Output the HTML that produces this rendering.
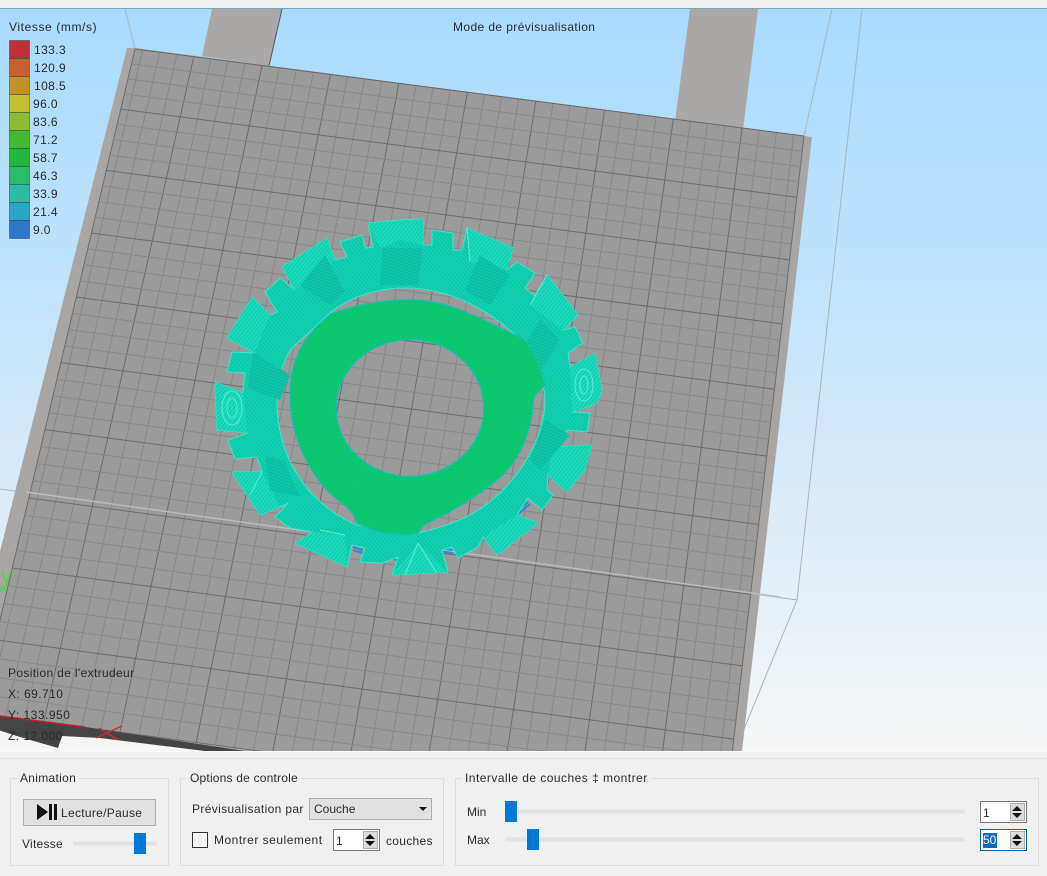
<!DOCTYPE html>
<html><head><meta charset="utf-8"><style>
html,body{margin:0;padding:0;width:1047px;height:876px;overflow:hidden;background:#f0f0f0}
body{position:relative;font-family:"Liberation Sans",sans-serif;font-size:12px;color:#2a2a2a}
.t{position:absolute;white-space:nowrap;line-height:14px}
.b{position:absolute;box-sizing:border-box}
.grp{position:absolute;box-sizing:border-box;border:1px solid #dcdcdc;top:778px;height:88px}
.cap{position:absolute;top:771px;background:#f0f0f0;padding:0 3px 0 3px;white-space:nowrap;line-height:14px}
.h{position:absolute;background:#0078d7;width:12px;height:21px}
.g{position:absolute;background:#e2e2e2;height:3px;border:1px solid #e8e8e8;box-sizing:content-box}
.sp{position:absolute;box-sizing:border-box;background:#fff;border:1px solid #7a7a7a;width:47px;height:22px}
.ar{position:absolute;right:1px;top:1px;width:15px;height:18px;background:#dcdcdc;border:1px solid #adadad;box-sizing:border-box}
.ar:before{content:"";position:absolute;left:1px;top:2px;border-left:5px solid transparent;border-right:5px solid transparent;border-bottom:5px solid #111}
.ar:after{content:"";position:absolute;left:1px;top:9px;border-left:5px solid transparent;border-right:5px solid transparent;border-top:5px solid #111}
</style></head><body>
<svg id="s" width="1047" height="876" viewBox="0 0 1047 876" style="position:absolute;left:0;top:0">
<defs>
<linearGradient id="sky" x1="0" y1="9" x2="0" y2="751" gradientUnits="userSpaceOnUse">
<stop offset="0" stop-color="#a9dbff"/><stop offset=".3" stop-color="#bbe1fd"/><stop offset=".72" stop-color="#e0edf8"/><stop offset="1" stop-color="#f5f6f6"/></linearGradient>
<pattern id="pg" width="3" height="3" patternUnits="userSpaceOnUse" patternTransform="rotate(-35)">
<rect width="3" height="3" fill="#08cc70"/><rect width="3" height="1" fill="#10bb6c"/></pattern>
<pattern id="pt" width="3" height="3" patternUnits="userSpaceOnUse" patternTransform="rotate(50)">
<rect width="3" height="3" fill="#12d2b2"/><rect width="3" height="1" fill="#0cc2a4"/></pattern>
<pattern id="pl" width="3" height="3" patternUnits="userSpaceOnUse" patternTransform="rotate(-50)">
<rect width="3" height="3" fill="#1edcbe"/><rect width="3" height="1" fill="#0fc8aa"/></pattern>
<pattern id="pd" width="3" height="3" patternUnits="userSpaceOnUse" patternTransform="rotate(20)">
<rect width="3" height="3" fill="#0fc6a8"/><rect width="3" height="1" fill="#0ab89c"/></pattern>
</defs>
<rect width="1047" height="751" fill="url(#sky)"/>
<g stroke="#a9b4bb" stroke-width="1" fill="none">
<path d="M125,9L135,49"/><path d="M832,9L804,136"/><path d="M862,9L797,600L735,751"/><path d="M0,489L797,600"/>
</g>
<polygon points="212,9 282,9 269,66 202,56" fill="#aaa8a6"/>
<polygon points="690,9 758,9 743,130 675,121" fill="#aaa8a6"/>
<path d="M282,9L269,66" stroke="#4a5a60" stroke-width="1"/>
<polygon points="127,48 135,48 812,137 742,751 245,751 0,716 -40,710" fill="#a9a5a2"/>
<polygon points="135,49 804,136 725,814 -22,713" fill="#9c9b9b"/>
<g id="grid" fill="none"></g>
<path d="M135,49L804,136" stroke="#666" stroke-width="1"/>
<path d="M26,492L780,597" stroke="#bdbdbd" stroke-width="1.4"/>
<path d="M2,572L7,585M11,570L3,592M0,592L3,586" stroke="#46d84a" stroke-width="1.5" fill="none"/>
<!-- dark bed edge -->
<polygon points="-2,716 85,727 245,751 205,751 100,738 62,736 58,748 20,737 -2,730" fill="#444"/>
<path d="M0,716L85,727" stroke="#c2202c" stroke-width="1.6"/>
<path d="M96,738L122,726M99,728L118,740" stroke="#c4303a" stroke-width="1.4" fill="none"/>
<!-- blue travel lines -->
<g stroke="#2b8fd2" stroke-width="2" fill="none">
<path d="M300,520L323,528M300,523L323,531"/><path d="M353,547L363,550M353,550L363,553"/><path d="M383,553L400,558M383,556L400,561"/>
<path d="M472,540L482,537M472,543L482,540"/><path d="M440,548L453,550M440,551L453,553"/><path d="M515,513L528,502M517,515L530,504"/><path d="M540,487L545,480"/>
</g>
<!-- gear ring and teeth -->
<path fill="url(#pt)" fill-rule="evenodd" stroke="#3fe6cc" stroke-width="1" stroke-linejoin="round" d="M368,223L400,220L423,219L423,245L432,245L432,230L453,233L453,250L462,250L467,228L513,248L507,270L517,262L535,273L525,288L535,296L547,275L578,315L563,330L575,327L583,343L568,353L570,367L595,353L602,390L597,403L572,412L590,413L587,432L567,430L553,447L592,445L585,470L567,492L548,475L547,490L553,495L542,510L528,498L517,515L538,523L497,555L483,537L478,547L458,558L452,547L442,550L448,572L392,575L398,557L383,563L360,562L365,548L352,545L347,567L295,543L313,532L290,528L275,517L288,503L280,507L260,515L232,472L262,472L257,457L235,459L228,440L248,433L217,430L215,382L243,393L245,373L227,372L232,352L255,353L227,338L252,297L270,315L277,312L265,292L280,278L295,290L282,267L327,238L335,260L347,257L340,242L362,235L365,248L373,247Z
M331,312C352,296 378,288 405,288C450,288 490,310 523,342C535,355 545,385 545,400C545,440 515,490 470,515C450,525 435,529 418,533L357,525C320,510 277,470 277,400C277,380 282,365 290,350Z"/>
<!-- facets -->
<g>
<polygon points="368,223 423,219 423,245 400,240 380,248" fill="url(#pl)"/>
<polygon points="467,228 513,248 507,270 470,262" fill="url(#pl)"/>
<polygon points="547,275 578,315 563,330 530,305" fill="url(#pl)"/>
<polygon points="595,353 602,390 597,403 572,412 570,367" fill="url(#pl)"/>
<polygon points="592,445 585,470 567,492 548,475 553,447" fill="url(#pl)"/>
<polygon points="538,523 497,555 483,537 517,515" fill="url(#pl)"/>
<polygon points="448,572 392,575 418,543" fill="url(#pl)"/>
<polygon points="295,543 347,567 345,535 313,532" fill="url(#pl)"/>
<polygon points="232,472 260,515 280,507 262,472" fill="url(#pl)"/>
<polygon points="215,382 243,393 248,433 217,430" fill="url(#pl)"/>
<polygon points="252,297 227,338 255,353 270,315" fill="url(#pl)"/>
<polygon points="327,238 282,267 295,290 335,260" fill="url(#pl)"/>
<polygon points="253,352 290,375 280,400 248,388" fill="url(#pd)"/>
<polygon points="300,285 330,305 345,292 325,255" fill="url(#pd)"/>
<polygon points="383,248 423,248 418,285 380,285" fill="url(#pd)"/>
<polygon points="480,255 510,275 490,305 465,290" fill="url(#pd)"/>
<polygon points="540,320 560,340 540,372 525,345" fill="url(#pd)"/>
<polygon points="545,420 570,435 540,470 530,460" fill="url(#pd)"/>
<polygon points="265,455 285,462 300,497 270,490" fill="url(#pd)"/>
<g fill="none" stroke="#5eecd6" stroke-width="1">
<ellipse cx="232" cy="408" rx="10" ry="17"/><ellipse cx="232" cy="408" rx="5" ry="10"/>
<ellipse cx="584" cy="385" rx="9" ry="16"/><ellipse cx="584" cy="385" rx="4" ry="9"/>
<path d="M418,543L405,575M418,543L436,572M345,535L320,530M262,472L250,495M547,275L530,305M467,228L470,262"/>
</g>
</g>
<!-- green infill -->
<path fill="url(#pg)" fill-rule="evenodd" stroke="#17bdb0" stroke-width="1.4" d="M331,314C350,306 380,300 410,300C455,300 490,325 522,338C532,345 540,365 545,385C538,392 533,395 533,405C530,440 515,465 497,480C475,498 445,515 427,523C422,526 420,530 418,533C400,538 375,532 357,523C355,515 350,510 345,505C320,490 295,450 291,410C287,370 297,340 331,314Z
M336,408a74,68.5 0 1,0 148,0a74,68.5 0 1,0 -148,0Z"/>
<!-- legend -->
<g stroke="#3a4a3a" stroke-opacity=".55">
<rect x="9.5" y="40.5" width="20" height="18" fill="#c1303a"/>
<rect x="9.5" y="58.5" width="20" height="18" fill="#c76030"/>
<rect x="9.5" y="76.5" width="20" height="18" fill="#c49028"/>
<rect x="9.5" y="94.5" width="20" height="18" fill="#c4c030"/>
<rect x="9.5" y="112.5" width="20" height="18" fill="#8cbc30"/>
<rect x="9.5" y="130.5" width="20" height="18" fill="#44b830"/>
<rect x="9.5" y="148.5" width="20" height="18" fill="#22b83c"/>
<rect x="9.5" y="166.5" width="20" height="18" fill="#28bc6c"/>
<rect x="9.5" y="184.5" width="20" height="18" fill="#2cbca4"/>
<rect x="9.5" y="202.5" width="20" height="18" fill="#2ca4c8"/>
<rect x="9.5" y="220.5" width="20" height="18" fill="#2c78cc"/>
</g>
</svg>
<div class="b" style="left:0;top:0;width:1047px;height:8px;background:#f0f0f0"></div>
<div class="b" style="left:0;top:8px;width:1047px;height:1px;background:#7aa4bc"></div>

<div class="t" style="left:9px;top:20px;letter-spacing:.6px">Vitesse (mm/s)</div>
<div class="t" style="left:453px;top:20px;letter-spacing:.4px">Mode de prévisualisation</div>
<div class="t" style="left:34px;top:43px;letter-spacing:.4px">133.3</div>
<div class="t" style="left:34px;top:61px;letter-spacing:.4px">120.9</div>
<div class="t" style="left:34px;top:79px;letter-spacing:.4px">108.5</div>
<div class="t" style="left:33px;top:97px;letter-spacing:.4px">96.0</div>
<div class="t" style="left:33px;top:115px;letter-spacing:.4px">83.6</div>
<div class="t" style="left:33px;top:133px;letter-spacing:.4px">71.2</div>
<div class="t" style="left:33px;top:151px;letter-spacing:.4px">58.7</div>
<div class="t" style="left:33px;top:169px;letter-spacing:.4px">46.3</div>
<div class="t" style="left:33px;top:187px;letter-spacing:.4px">33.9</div>
<div class="t" style="left:33px;top:205px;letter-spacing:.4px">21.4</div>
<div class="t" style="left:33px;top:223px;letter-spacing:.4px">9.0</div>

<div class="t" style="left:8px;top:666px;letter-spacing:.35px">Position de l'extrudeur</div>
<div class="t" style="left:8px;top:687px;letter-spacing:.45px">X: 69.710</div>
<div class="t" style="left:8px;top:708px;letter-spacing:.5px">Y: 133.950</div>
<div class="t" style="left:8px;top:729px;letter-spacing:.45px">Z: 12.000</div>

<div class="b" style="left:0;top:751px;width:1047px;height:125px;background:#f0f0f0"></div>
<div class="b" style="left:0;top:751px;width:1047px;height:1px;background:#fafafa"></div>
<div class="b" style="left:0;top:758px;width:1047px;height:1px;background:#e0e0e0"></div>

<div class="grp" style="left:10px;width:159px"></div>
<div class="grp" style="left:180px;width:264px"></div>
<div class="grp" style="left:455px;width:584px"></div>
<div class="cap" style="left:17px;letter-spacing:.3px">Animation</div>
<div class="cap" style="left:187px;letter-spacing:.2px">Options de controle</div>
<div class="cap" style="left:462px;letter-spacing:.47px">Intervalle de couches ‡ montrer</div>

<div class="b" style="left:23px;top:799px;width:133px;height:27px;background:#e1e1e1;border:1px solid #adadad"></div>
<svg style="position:absolute;left:36px;top:803px" width="22" height="18"><polygon points="1,1 12,9 1,17" fill="#111"/><rect x="13" y="1" width="3" height="16" fill="#111"/><rect x="18" y="1" width="3" height="16" fill="#111"/></svg>
<div class="t" style="left:61px;top:806px;letter-spacing:.3px">Lecture/Pause</div>
<div class="t" style="left:22px;top:837px;letter-spacing:.25px">Vitesse</div>
<div class="g" style="left:73px;top:841px;width:82px"></div>
<div class="h" style="left:134px;top:833px"></div>

<div class="t" style="left:192px;top:802px;letter-spacing:.35px">Prévisualisation par</div>
<div class="b" style="left:309px;top:798px;width:123px;height:22px;background:#e1e1e1;border:1px solid #adadad"></div>
<div class="t" style="left:314px;top:802px">Couche</div>
<div class="b" style="left:419px;top:807px;width:0;height:0;border-left:4px solid transparent;border-right:4px solid transparent;border-top:4px solid #111"></div>
<div class="b" style="left:192px;top:832px;width:16px;height:16px;background:#f4f4f4;border:1px solid #333"></div>
<div class="t" style="left:214px;top:833px;letter-spacing:.5px">Montrer seulement</div>
<div class="sp" style="left:333px;top:829px"><div class="ar"></div></div>
<div class="t" style="left:336px;top:834px">1</div>
<div class="t" style="left:386px;top:834px;letter-spacing:.3px">couches</div>

<div class="t" style="left:467px;top:805px">Min</div>
<div class="t" style="left:467px;top:833px">Max</div>
<div class="g" style="left:505px;top:809px;width:458px"></div>
<div class="g" style="left:505px;top:837px;width:458px"></div>
<div class="h" style="left:505px;top:801px"></div>
<div class="h" style="left:527px;top:829px"></div>
<div class="sp" style="left:980px;top:801px"><div class="ar"></div></div>
<div class="t" style="left:983px;top:806px">1</div>
<div class="sp" style="left:980px;top:829px;border-color:#0a5f9e"><div class="ar"></div></div>
<div class="t" style="left:983px;top:833px;background:#0a6bc0;color:#fff;padding:0 1px 0 0;line-height:15px">50</div>

<script>
(function(){
var P=[[135,49],[804,136],[725,814],[-22,713]];
var x0=P[0][0],y0=P[0][1],x1=P[1][0],y1=P[1][1],x2=P[2][0],y2=P[2][1],x3=P[3][0],y3=P[3][1];
var dx1=x1-x2,dx2=x3-x2,sx=x0-x1+x2-x3,dy1=y1-y2,dy2=y3-y2,sy=y0-y1+y2-y3;
var den=dx1*dy2-dx2*dy1,g=(sx*dy2-dx2*sy)/den,h=(dx1*sy-sx*dy1)/den;
var a=x1-x0+g*x1,b=x3-x0+h*x3,c=x0,d=y1-y0+g*y1,e=y3-y0+h*y3,f=y0;
function M(u,v){var w=g*u+h*v+1;return [(a*u+b*v+c)/w,(d*u+e*v+f)/w];}
var U=39.05,V=40,o="";
function L(A,B,m){o+='<path d="M'+A[0].toFixed(1)+','+A[1].toFixed(1)+'L'+B[0].toFixed(1)+','+B[1].toFixed(1)+'" stroke="'+(m?'#6c6c6c':'#878787')+'" stroke-width="1"/>';}
for(var i=0;i<=U+.5;i++){var k=i+.45;if(k>U)break;var m=(i%4==3);L(M(k/U,0),M(k/U,1),m);}
L(M(0,0),M(0,1),true);L(M(1,0),M(1,1),true);
for(var j=1;j<=V;j++){L(M(0,j/V),M(1,j/V),j%4==0);}
document.getElementById("grid").innerHTML=o;
})();
</script>
</body></html>
